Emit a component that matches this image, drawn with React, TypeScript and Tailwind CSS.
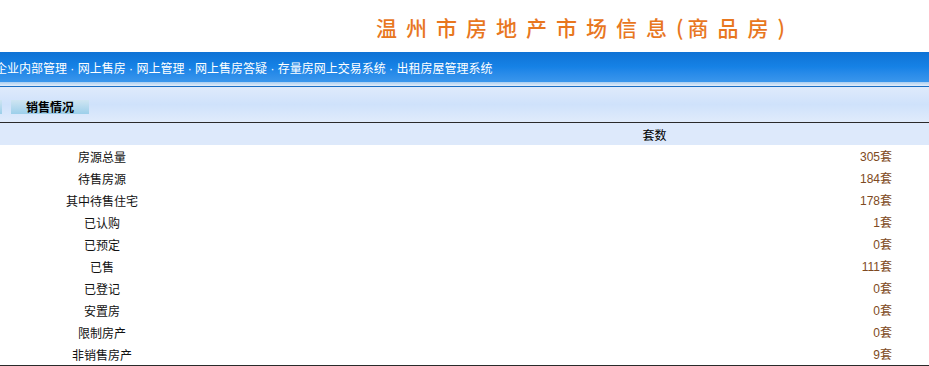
const navLinks = ['企业内部管理', '网上售房', '网上管理', '网上售房答疑', '存量房网上交易系统', '出租房屋管理系统'];

const rows = [
  { name: '房源总量', count: 305 },
  { name: '待售房源', count: 184 },
  { name: '其中待售住宅', count: 178 },
  { name: '已认购', count: 1 },
  { name: '已预定', count: 0 },
  { name: '已售', count: 111 },
  { name: '已登记', count: 0 },
  { name: '安置房', count: 0 },
  { name: '限制房产', count: 0 },
  { name: '非销售房产', count: 9 },
];

export default function App() {
  return (
    <div className="w-[929px] h-[366px] overflow-hidden bg-white font-['Noto_Sans_CJK_SC',sans-serif] text-[12px] text-[#111]">
      {/* 标题 */}
      <div className="h-[52px] pl-[376px] pt-[12px]">
        <h1 className="text-[21px] leading-[30px] tracking-[9px] text-[#e8771f] font-medium whitespace-nowrap">
          温州市房地产市场信息<span className="tracking-[4px]">(</span>商品房<span className="tracking-normal">)</span>
        </h1>
      </div>

      {/* 导航条 */}
      <div className="h-[30px] bg-gradient-to-b from-[#0e72d5] via-[#1682e6] to-[#3a96ec] flex items-center pt-[3px]">
        <div className="ml-[-5px] text-white whitespace-nowrap font-['Liberation_Sans','Noto_Sans_CJK_SC',sans-serif] leading-none">
          {navLinks.map((link, i) => (
            <span key={link}>
              {i > 0 && ' · '}
              {link}
            </span>
          ))}
        </div>
      </div>
      <div className="h-[4px] bg-gradient-to-b from-[#a9cdf0] to-[#e4eefa]" />
      <div className="h-px bg-[#1c6fc4]" />

      {/* 栏目标题 */}
      <div className="h-[36px] bg-gradient-to-b from-[#dfeafb] via-[#cfe2fb] to-[#e0ebfb] flex items-center gap-[9px] border-b border-[#2a2a2a] pt-[5px]">
        <div className="w-[2px] h-[14px] bg-gradient-to-b from-[#cfe5f2] to-[#9ccfea]" />
        <div className="w-[78px] h-[14px] bg-gradient-to-b from-[#cfe5f2] to-[#9ccfea] pl-[15px] font-bold leading-[14px] text-black">
          销售情况
        </div>
      </div>

      {/* 表格 */}
      <div className="grid grid-cols-[204px_176px_1fr] h-[22px] items-center bg-[#dde9fb] pt-[2px]">
        <div />
        <div />
        <div className="text-center text-black">套数</div>
      </div>
      {rows.map((row) => (
        <div key={row.name} className="grid grid-cols-[204px_176px_1fr] h-[22px] items-center pt-px">
          <div className="text-center">{row.name}</div>
          <div />
          <div className="text-right pr-[37px] text-[#7e4a22] font-['Liberation_Sans','Noto_Sans_CJK_SC',sans-serif]">
            {row.count}套
          </div>
        </div>
      ))}
      <div className="h-px bg-[#2a2a2a]" />
    </div>
  );
}
